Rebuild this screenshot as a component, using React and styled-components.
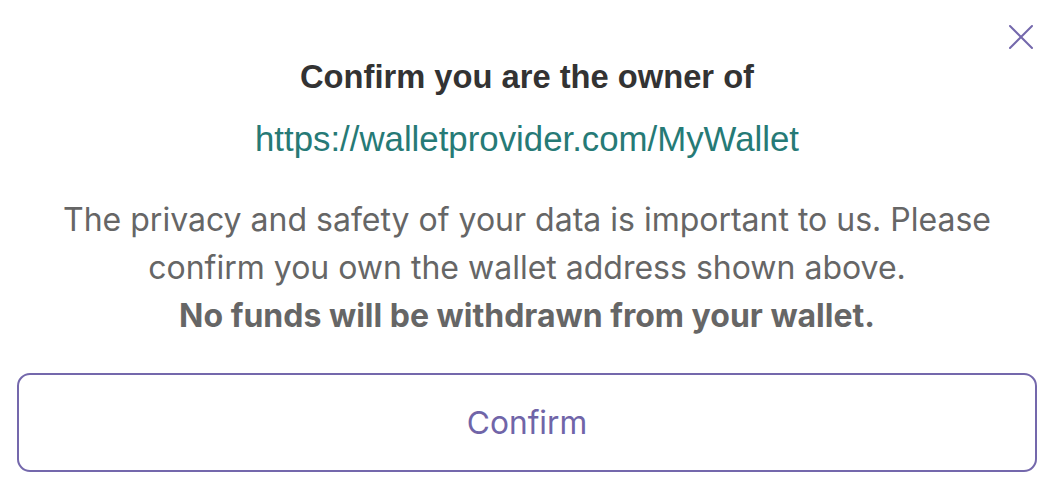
import React from "react";
import styled, { createGlobalStyle } from "styled-components";

const Global = createGlobalStyle`
  html, body { margin: 0; padding: 0; background: #fff; }
  * { box-sizing: border-box; }
`;

const Dialog = styled.div`
  position: relative;
  width: 1056px;
  height: 500px;
  padding: 57px 19px 0 17px;
  display: flex;
  flex-direction: column;
  align-items: center;
  background: #fff;
`;

const Close = styled.button`
  position: absolute;
  top: 24px;
  right: 22px;
  width: 26px;
  height: 26px;
  padding: 0;
  border: none;
  background: transparent;
  cursor: pointer;
  display: flex;
  align-items: center;
  justify-content: center;
`;

const Title = styled.h2`
  margin: 0;
  font-family: "Liberation Sans", Arial, sans-serif;
  font-weight: 700;
  font-size: 32.7px;
  line-height: 40px;
  color: #333;
  text-align: center;
`;

const Url = styled.div`
  margin-top: 22px;
  font-family: "Liberation Sans", Arial, sans-serif;
  font-size: 34.8px;
  line-height: 40px;
  color: #267a76;
  text-align: center;
`;

const Body = styled.p`
  margin: 37px 0 0;
  font-family: Inter, sans-serif;
  font-size: 32px;
  line-height: 48px;
  color: #666;
  text-align: center;
`;

const Strong = styled.strong`
  font-weight: 700;
`;

const ConfirmButton = styled.button`
  margin-top: 33px;
  width: 100%;
  height: 99px;
  border: 2px solid #7468ac;
  border-radius: 13px;
  background: #fff;
  font-family: Inter, sans-serif;
  font-size: 31.7px;
  color: #7065a8;
  cursor: pointer;
`;

export default function App() {
  return (
    <>
      <Global />
      <Dialog>
        <Close aria-label="Close">
          <svg width="26" height="26" viewBox="0 0 26 26">
            <path d="M2 2 L24 24 M24 2 L2 24" stroke="#7468ac" strokeWidth="2" strokeLinecap="round" />
          </svg>
        </Close>
        <Title>Confirm you are the owner of</Title>
        <Url>https://walletprovider.com/MyWallet</Url>
        <Body>
          The privacy and safety of your data is important to us. Please
          <br />
          confirm you own the wallet address shown above.
          <br />
          <Strong>No funds will be withdrawn from your wallet.</Strong>
        </Body>
        <ConfirmButton>Confirm</ConfirmButton>
      </Dialog>
    </>
  );
}
